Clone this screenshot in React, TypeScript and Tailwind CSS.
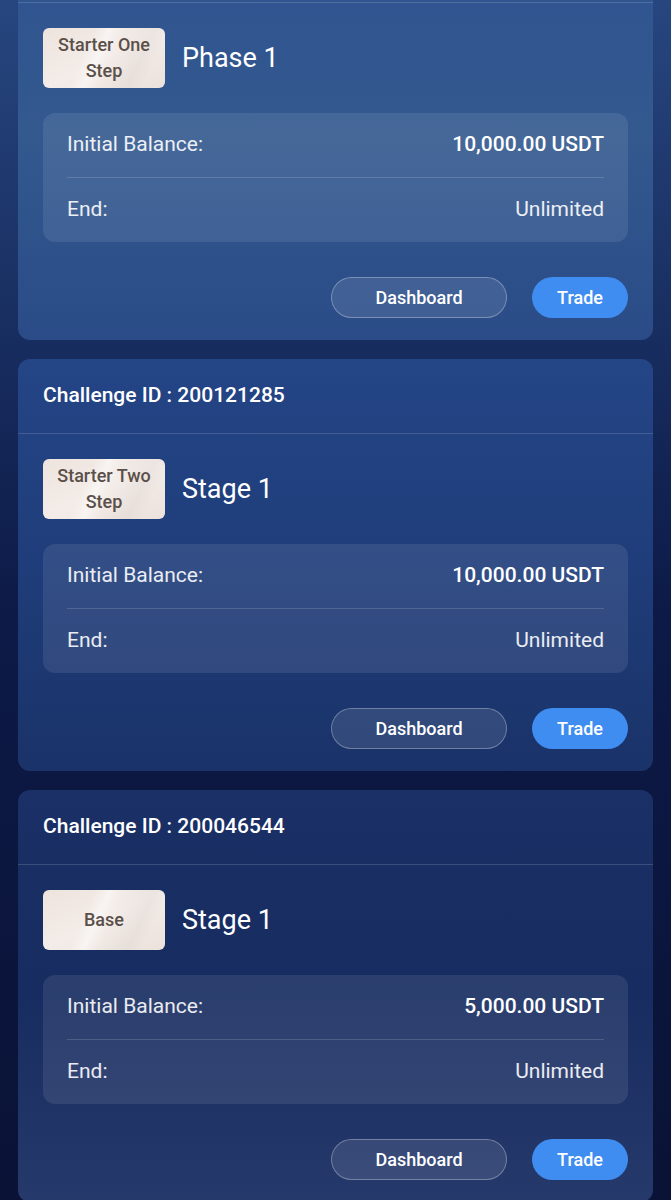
import React from "react"

type Challenge = {
  id: string
  plan: string[]
  stage: string
  balance: string
  end: string
  bg: string
}

const challenges: Challenge[] = [
  {
    id: "200134127",
    plan: ["Starter One", "Step"],
    stage: "Phase 1",
    balance: "10,000.00 USDT",
    end: "Unlimited",
    bg: "bg-gradient-to-b from-[#2e5290] via-[#33598f] to-[#2a4b87]",
  },
  {
    id: "200121285",
    plan: ["Starter Two", "Step"],
    stage: "Stage 1",
    balance: "10,000.00 USDT",
    end: "Unlimited",
    bg: "bg-gradient-to-b from-[#244586] via-[#1f3d7a] to-[#1a3369]",
  },
  {
    id: "200046544",
    plan: ["Base"],
    stage: "Stage 1",
    balance: "5,000.00 USDT",
    end: "Unlimited",
    bg: "bg-gradient-to-b from-[#1a3066] via-[#172c60] to-[#26396b]",
  },
]

function PlanBadge({ lines }: { lines: string[] }) {
  return (
    <div className="relative flex h-[60px] w-[122px] shrink-0 flex-col items-center justify-center overflow-hidden rounded-[6px] bg-gradient-to-br from-[#eee4de] via-[#f3ece8] to-[#ece2dc] text-[18px] font-medium leading-[26px] text-[#5b4f4a]">
      <div className="absolute inset-0 bg-[linear-gradient(115deg,transparent_35%,rgba(255,255,255,0.5)_45%,transparent_55%,rgba(0,0,0,0.03)_75%,transparent_85%)]" />
      {lines.map((l) => (
        <span key={l} className="relative">
          {l}
        </span>
      ))}
    </div>
  )
}

function ChallengeCard({ c, first }: { c: Challenge; first?: boolean }) {
  return (
    <div className={`relative overflow-hidden rounded-[12px] ${c.bg} ${first ? "-mt-[72px]" : ""}`}>
      <div className="flex h-[75px] items-center border-b border-white/15 px-[25px] text-[21px] font-medium text-white">
        Challenge ID : {c.id}
      </div>
      <div className="px-[25px] pb-[22px] pt-[25px]">
        <div className="flex items-center gap-[17px]">
          <PlanBadge lines={c.plan} />
          <div className="text-[27px] text-white">{c.stage}</div>
        </div>

        <div className="mt-[25px] rounded-[12px] bg-white/[0.09] px-[24px]">
          <div className="flex h-[65px] items-center justify-between border-b border-white/15 text-[21px]">
            <span className="text-white/90">Initial Balance:</span>
            <span className="font-medium text-white">{c.balance}</span>
          </div>
          <div className="flex h-[64px] items-center justify-between text-[21px] text-white/90">
            <span>End:</span>
            <span>{c.end}</span>
          </div>
        </div>

        <div className="mt-[35px] flex justify-end gap-[25px]">
          <button className="h-[41px] w-[176px] rounded-full border border-white/30 bg-white/10 text-[18px] font-medium text-white">
            Dashboard
          </button>
          <button className="h-[41px] w-[96px] rounded-full bg-[#3f8df0] text-[18px] font-medium text-white">
            Trade
          </button>
        </div>
      </div>
    </div>
  )
}

export default function App() {
  return (
    <div
      className="min-h-[1200px] overflow-hidden bg-gradient-to-b from-[#27467f] via-[#0d1a47] to-[#0a1235] px-[18px] pb-[20px]"
      style={{ fontFamily: "Roboto, 'Noto Sans', sans-serif" }}
    >
      <div className="flex flex-col gap-[19px]">
        {challenges.map((c, i) => (
          <ChallengeCard key={c.id} c={c} first={i === 0} />
        ))}
      </div>
    </div>
  )
}
